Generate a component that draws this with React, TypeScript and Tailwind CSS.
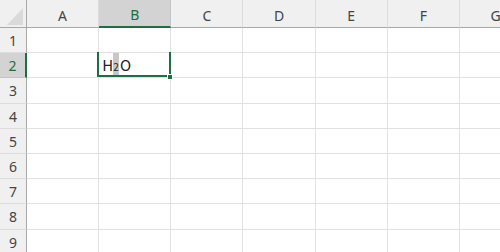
import React from "react";

const cols = ["A", "B", "C", "D", "E", "F", "G"];
const rows = [1, 2, 3, 4, 5, 6, 7, 8, 9];

export default function App() {
  return (
    <div
      className="w-[500px] h-[252px] overflow-hidden bg-white text-[#444]"
      style={{ fontFamily: '"Noto Sans", "Liberation Sans", sans-serif' }}
    >
      <div className="grid grid-cols-[27px_repeat(7,72.17px)] grid-rows-[28px_repeat(9,25.2px)] w-max">
        {/* corner */}
        <div className="relative bg-[#f0f0f0] border-r border-b border-[#a8a8a8]">
          <svg className="absolute left-0 top-0" width="27" height="28" viewBox="0 0 27 28">
            <polygon points="7,25 23,8 23,25" fill="#dadada" />
          </svg>
        </div>
        {cols.map((c) => (
          <div
            key={c}
            className={
              c === "B"
                ? "flex items-center justify-center pt-[3px] bg-[#d3d3d3] border-r border-[#c4c4c4] border-b-2 border-b-[#1e6e42] text-[14px] text-[#1e6e42]"
                : "flex items-center justify-center pt-[3px] bg-[#f0f0f0] border-r border-[#dcdcdc] border-b border-b-[#a8a8a8] text-[14px]"
            }
          >
            {c}
          </div>
        ))}

        {rows.map((r) => (
          <React.Fragment key={r}>
            <div
              className={
                r === 2
                  ? "flex items-center justify-center pt-[1px] bg-[#d3d3d3] border-r-2 border-r-[#1e6e42] border-b border-b-[#c4c4c4] text-[14px] text-[#1e6e42]"
                  : "flex items-center justify-center pt-[1px] bg-[#f0f0f0] border-r border-r-[#a8a8a8] border-b border-b-[#dcdcdc] text-[14px]"
              }
            >
              {r}
            </div>
            {cols.map((c) =>
              r === 2 && c === "B" ? (
                <div key={c} className="relative border-r border-b border-[#e1e1e1]">
                  <div
                    className="flex h-full items-end pl-[3px] pb-[4px] text-[15px] leading-none text-[#222]"
                    style={{ fontFamily: '"Noto Sans CJK JP", "Noto Sans", sans-serif' }}
                  >
                    <span className="pb-[1px]">H</span>
                    <span className="self-stretch flex items-end bg-[#c8c8c8] w-[6px] justify-center -mb-[4px] pb-[5px] text-[10px]">
                      2
                    </span>
                    <span className="pb-[1px] ml-[1px]">O</span>
                  </div>
                  <div className="absolute -left-[2px] -top-[1px] -right-[1px] bottom-0 border-l-2 border-r-2 border-b-2 border-[#1e6e42]" />
                  <div className="absolute -right-[3px] -bottom-[3px] w-[6px] h-[6px] bg-[#1e6e42] border border-white" />
                </div>
              ) : (
                <div key={c} className="border-r border-b border-[#e1e1e1]" />
              )
            )}
          </React.Fragment>
        ))}
      </div>
    </div>
  );
}
